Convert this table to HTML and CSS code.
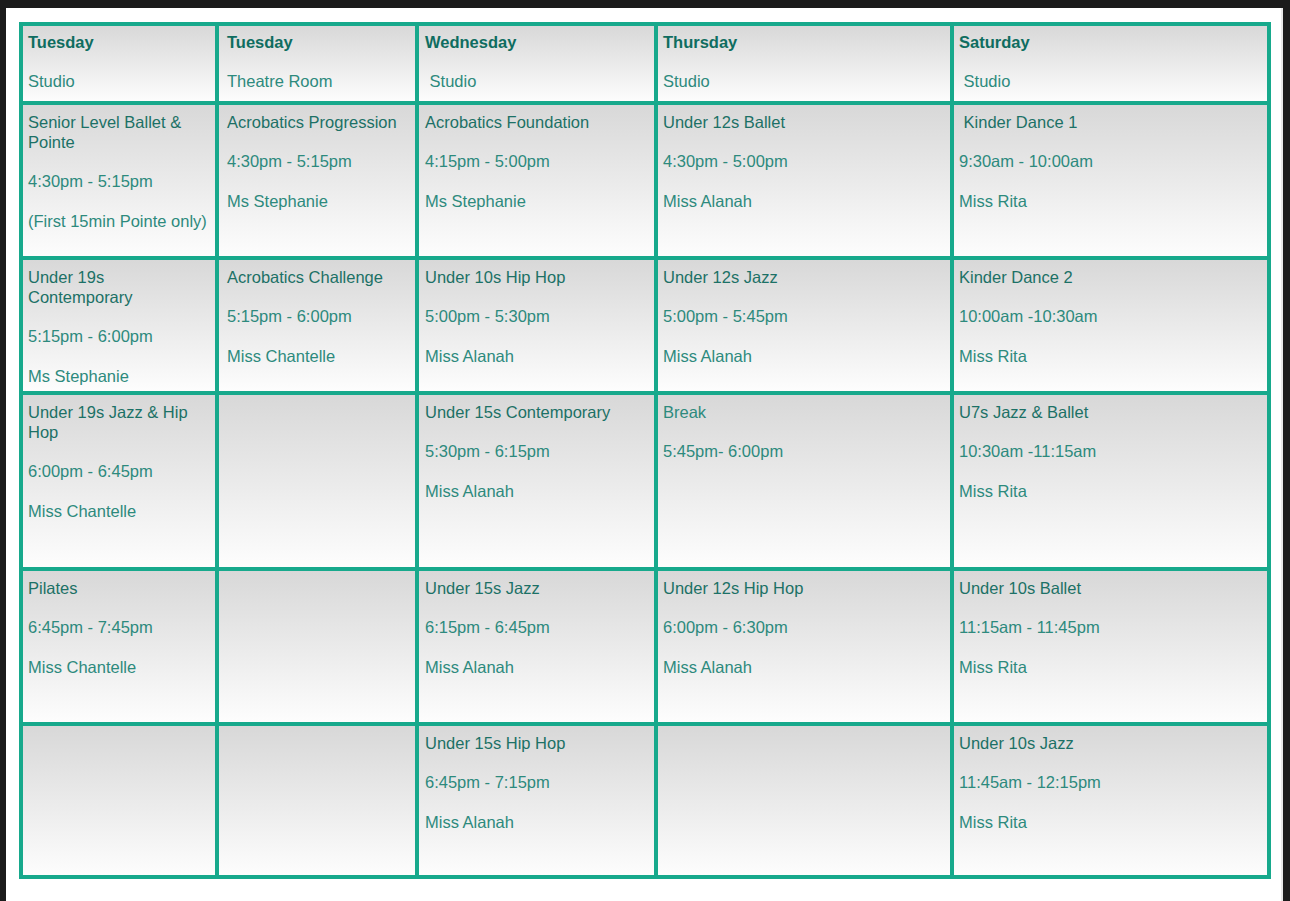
FILE: index.html
```html
<!DOCTYPE html>
<html>
<head>
<meta charset="utf-8">
<link rel="stylesheet" href="styles.css">
<title>Timetable</title>
</head>
<body>
<div class="page">
  <div class="timetable">
    <div class="cell head"><p class="day">Tuesday</p><p>Studio</p></div>
    <div class="cell head c2"><p class="day">Tuesday</p><p>Theatre Room</p></div>
    <div class="cell head c3"><p class="day">Wednesday</p><p>&nbsp;Studio</p></div>
    <div class="cell head"><p class="day">Thursday</p><p>Studio</p></div>
    <div class="cell head"><p class="day">Saturday</p><p>&nbsp;Studio</p></div>

    <div class="cell"><p class="title">Senior Level Ballet &amp; Pointe</p><p>4:30pm - 5:15pm</p><p>(First 15min Pointe only)</p></div>
    <div class="cell c2"><p class="title">Acrobatics Progression</p><p>4:30pm - 5:15pm</p><p>Ms Stephanie</p></div>
    <div class="cell c3"><p class="title">Acrobatics Foundation</p><p>4:15pm - 5:00pm</p><p>Ms Stephanie</p></div>
    <div class="cell"><p class="title">Under 12s Ballet</p><p>4:30pm - 5:00pm</p><p>Miss Alanah</p></div>
    <div class="cell"><p class="title">&nbsp;Kinder Dance 1</p><p>9:30am - 10:00am</p><p>Miss Rita</p></div>

    <div class="cell"><p class="title">Under 19s Contemporary</p><p>5:15pm - 6:00pm</p><p>Ms Stephanie</p></div>
    <div class="cell c2"><p class="title">Acrobatics Challenge</p><p>5:15pm - 6:00pm</p><p>Miss Chantelle</p></div>
    <div class="cell c3"><p class="title">Under 10s Hip Hop</p><p>5:00pm - 5:30pm</p><p>Miss Alanah</p></div>
    <div class="cell"><p class="title">Under 12s Jazz</p><p>5:00pm - 5:45pm</p><p>Miss Alanah</p></div>
    <div class="cell"><p class="title">Kinder Dance 2</p><p>10:00am -10:30am</p><p>Miss Rita</p></div>

    <div class="cell"><p class="title">Under 19s Jazz &amp; Hip Hop</p><p>6:00pm - 6:45pm</p><p>Miss Chantelle</p></div>
    <div class="cell c2"></div>
    <div class="cell c3"><p class="title">Under 15s Contemporary</p><p>5:30pm - 6:15pm</p><p>Miss Alanah</p></div>
    <div class="cell"><p class="title light">Break</p><p>5:45pm- 6:00pm</p></div>
    <div class="cell"><p class="title">U7s Jazz &amp; Ballet</p><p>10:30am -11:15am</p><p>Miss Rita</p></div>

    <div class="cell"><p class="title">Pilates</p><p>6:45pm - 7:45pm</p><p>Miss Chantelle</p></div>
    <div class="cell c2"></div>
    <div class="cell c3"><p class="title">Under 15s Jazz</p><p>6:15pm - 6:45pm</p><p>Miss Alanah</p></div>
    <div class="cell"><p class="title">Under 12s Hip Hop</p><p>6:00pm - 6:30pm</p><p>Miss Alanah</p></div>
    <div class="cell"><p class="title">Under 10s Ballet</p><p>11:15am - 11:45pm</p><p>Miss Rita</p></div>

    <div class="cell"></div>
    <div class="cell c2"></div>
    <div class="cell c3"><p class="title">Under 15s Hip Hop</p><p>6:45pm - 7:15pm</p><p>Miss Alanah</p></div>
    <div class="cell"></div>
    <div class="cell"><p class="title">Under 10s Jazz</p><p>11:45am - 12:15pm</p><p>Miss Rita</p></div>
  </div>
</div>
</body>
</html>
```

FILE: styles.css
```css
html, body {
  margin: 0;
  padding: 0;
  background: #1b1b1b;
  height: 100%;
}

body {
  padding: 8px 7px 0 6px;
  box-sizing: border-box;
}

.page {
  background: #ffffff;
  border-right: 2px solid #e8e8e8;
  height: 100%;
  padding: 14px 0 0 13px;
  box-sizing: border-box;
}

.timetable {
  display: grid;
  grid-template-columns: 192px 196px 235px 292px 313px;
  grid-template-rows: 75px 151px 131px 172px 151px 149px;
  gap: 4px;
  padding: 4px;
  width: max-content;
  background: #17a98c;
  font-family: "Liberation Sans", Arial, sans-serif;
  font-size: 16.5px;
  line-height: 20px;
  color: #2d8a7d;
}

.cell {
  background: linear-gradient(to bottom, #d8d8d8 0%, #ececec 55%, #fdfdfd 100%);
  padding: 7px 4px 0 5px;
  display: flex;
  flex-direction: column;
  gap: 19.3px;
  overflow: hidden;
}

.cell.c2 {
  padding-left: 8px;
}

.cell.c3 {
  padding-left: 6px;
}

.cell.head {
  padding-top: 6px;
  gap: 19px;
}

.cell p {
  margin: 0;
}

.day {
  font-weight: bold;
  color: #0f6d60;
}

.title {
  color: #1c7166;
}

.title.light {
  color: #2d8a7d;
}
```
